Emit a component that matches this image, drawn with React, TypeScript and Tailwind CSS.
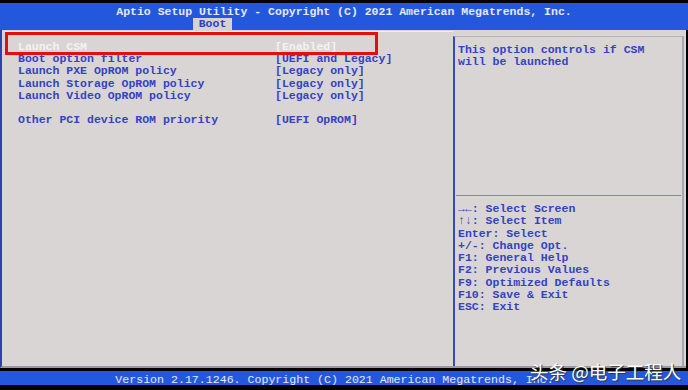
const leftRows = [
  { label: "Launch CSM", value: "[Enabled]", active: true },
  { label: "Boot option filter", value: "[UEFI and Legacy]" },
  { label: "Launch PXE OpROM policy", value: "[Legacy only]" },
  { label: "Launch Storage OpROM policy", value: "[Legacy only]" },
  { label: "Launch Video OpROM policy", value: "[Legacy only]" },
  { label: "", value: "" },
  { label: "Other PCI device ROM priority", value: "[UEFI OpROM]" },
];

const keys = [
  "→←: Select Screen",
  "↑↓: Select Item",
  "Enter: Select",
  "+/-: Change Opt.",
  "F1: General Help",
  "F2: Previous Values",
  "F9: Optimized Defaults",
  "F10: Save & Exit",
  "ESC: Exit",
];

export default function App() {
  return (
    <div
      className="relative w-[688px] h-[390px] bg-black flex flex-col overflow-hidden"
      style={{ fontFamily: '"Liberation Mono", "DejaVu Sans Mono", monospace' }}
    >
      {/* Title bar */}
      <div className="mt-[3px] h-[27px] bg-[#2458dc] relative flex flex-col items-center">
        <div className="mt-[3px] text-[11.5px] leading-[11px] font-bold text-[#e6e8f4] whitespace-pre">
          Aptio Setup Utility - Copyright (C) 2021 American Megatrends, Inc.
        </div>
        <div className="absolute left-[193px] top-[15px] w-[39px] h-[12px] bg-[#d6d2d2] text-[#2c3fc4] text-[11.5px] leading-[12px] font-bold text-center">
          Boot
        </div>
      </div>

      {/* Body */}
      <div className="flex-1 bg-[#d9d5d5] flex border-l-[2px] border-[#3040b0] border-b-[2px] border-b-[#9a9aa4] mr-[2px]">
        {/* Left panel */}
        <div className="w-[451px] pt-[1px] relative">
          <div className="ml-[3px] h-[1px] bg-[#eeeeee]" />
          <div className="absolute left-[3px] top-[2px] w-[373px] h-[23px] border-[3px] border-[#e01010]" />
          <div className="pt-[9px] text-[11.5px] leading-[12.2px] font-bold">
            {leftRows.map((r, i) => (
              <div key={i} className="flex h-[12.2px] whitespace-pre">
                <span className={`pl-[16px] w-[273px] ${r.active ? "text-[#f4f2f2]" : "text-[#3442c4]"}`}>{r.label}</span>
                <span className={r.active ? "text-[#f4f2f2]" : "text-[#3442c4]"}>{r.value}</span>
              </div>
            ))}
          </div>
        </div>

        {/* Right panel */}
        <div className="flex-1 flex flex-col mt-[6px] border-l-[2px] border-[#3a48c0] border-t border-t-[#b4b0b4] border-r-[2px] border-r-[#a8a6b0] mr-[2px]">
          <div className="h-[158px] px-[3px] pt-[7px] text-[11.5px] leading-[12.2px] font-bold text-[#3442c4] whitespace-pre">
            <div>This option controls if CSM</div>
            <div>will be launched</div>
          </div>
          <div className="mx-[1px] h-[1px] bg-[#8088a8]" />
          <div className="px-[3px] pt-[7px] text-[11.5px] leading-[12.3px] font-bold text-[#3442c4] whitespace-pre">
            {keys.map((k) => (
              <div key={k}>{k}</div>
            ))}
          </div>
        </div>
      </div>

      {/* Footer */}
      <div className="mt-[3px] h-[14px] bg-[#2458dc] flex justify-center pr-[19px]">
        <div className="mt-[3px] text-[11.6px] leading-[11px] text-[#e6e8f4] whitespace-pre">
          Version 2.17.1246. Copyright (C) 2021 American Megatrends, Inc.
        </div>
      </div>
      <div className="h-[5px]" />

      {/* Watermark */}
      <div
        className="absolute left-[530px] top-[359px] text-[18.5px] leading-[24px] text-white"
        style={{ fontFamily: '"Noto Sans CJK SC", "Noto Sans", sans-serif', textShadow: "1px 1px 1px #333" }}
      >
        头条 @电子工程人
      </div>
    </div>
  );
}
